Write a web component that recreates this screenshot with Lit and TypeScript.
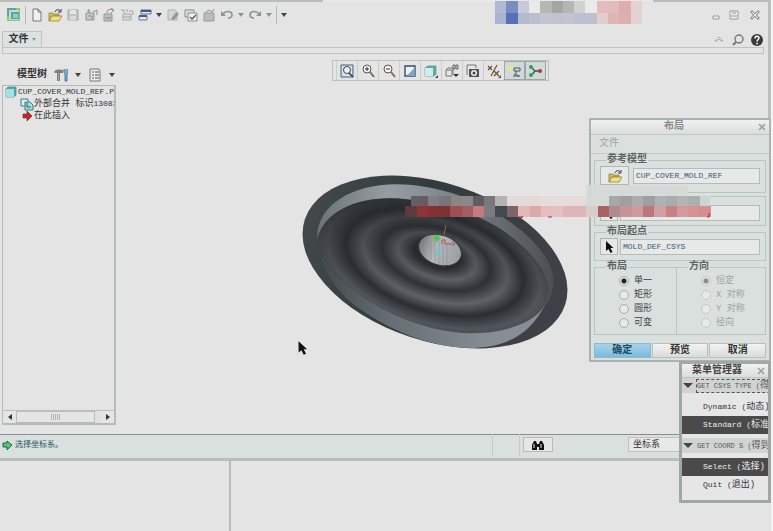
import { LitElement, html, svg, css } from "lit";
import { customElement } from "lit/decorators.js";

type Cell = [number, string];

const folder = svg`<path d="M1 5h4l1 1h5v2H4l-3 5z" fill="#cdbb5c" stroke="#8f8445" stroke-width=".8"/><path d="M4 8h10l-3 5H1z" fill="#f0e27c" stroke="#8f8445" stroke-width=".8"/><path d="M7 4c1-3 4-3 5-1m1-2v3h-3" fill="none" stroke="#333"/>`;

const glyphs: Record<string, unknown> = {
  logo: svg`<rect x="0" y="0" width="13" height="13" fill="#8fc56f"/><rect x="0" y="0" width="9" height="8" fill="#5f9db5"/><rect x="2" y="2" width="10" height="10" fill="#c3dfb5"/><rect x="4" y="4" width="8" height="7" fill="#4fa6ad"/><rect x="6" y="6" width="5" height="4" fill="#8fd0c4"/>`,
  page: svg`<path d="M3 1h5l3 3v9H3z" fill="#f0f0f0" stroke="#777"/><path d="M8 1v3h3" fill="none" stroke="#777"/>`,
  folder,
  save: svg`<path d="M2 2h10v10H2z" fill="#c4c6c6" stroke="#a4a7a7"/><path d="M4 2h6v4H4z" fill="#e4e4e4"/><path d="M4 8h6v4H4z" fill="#d8dada"/>`,
  saveAs: svg`<path d="M2 5h8v7H2z" fill="#c8c8c8" stroke="#909494"/><path d="M4 8h4v4M3 3h3M5 1v4M9 4l4-2v5" fill="none" stroke="#8d9191"/>`,
  saveUp: svg`<path d="M2 6h8v7H2z" fill="#bcbfbf" stroke="#929696"/><path d="M5 5c0-4 3-4 6-3M9 0l3 2-3 3M4 10h5" fill="none" stroke="#858989"/>`,
  box: svg`<path d="M3 6h8v6H3z" fill="#ddd" stroke="#a5a8a8"/><path d="M1 2h3v3m3-4v3m2-1h4v4M3 9h8" fill="none" stroke="#a0a3a3"/>`,
  windows: svg`<path d="M3 2h10v4H3z" fill="#e7edf4" stroke="#526c91"/><path d="M3 3h10" stroke="#3e5a86" stroke-width="2"/><path d="M1 8h8v4H1z" fill="#dce6ef" stroke="#6b7c92"/><path d="M1 8h8" stroke="#465f88" stroke-width="2"/>`,
  eraser: svg`<path d="M2 2h7l2 2v8H2z" fill="#d4d4d4" stroke="#b1b4b4"/><path d="M5 11l5-7 3 2-5 6z" fill="#949797"/>`,
  check: svg`<path d="M1 2h9v7H1z" fill="#ddd" stroke="#8b8e8e"/><path d="M4 5h9v8H4z" fill="#efefef" stroke="#8b8e8e"/><path d="M6 9l2 2 4-4" fill="none" stroke="#555" stroke-width="1.3"/>`,
  bin: svg`<path d="M2 5h10v8H2z" fill="#b9bcbc" stroke="#9a9d9d"/><path d="M4 4l3-2 3 2 2-3" fill="none" stroke="#8e9191"/>`,
  undo: svg`<path d="M3 6c3-4 9-3 9 1 0 2-2 3-4 3" fill="none" stroke="#8f9292" stroke-width="1.6"/><path d="M1 3v5h5z" fill="#8f9292"/>`,
  redo: svg`<path d="M11 6C8 2 2 3 2 7c0 2 2 3 4 3" fill="none" stroke="#8f9292" stroke-width="1.6"/><path d="M13 3v5H8z" fill="#8f9292"/>`,
  min: svg`<path d="M4 8h6v3H4z" fill="#eee" stroke="#999"/>`,
  max: svg`<path d="M3 3h8v8H3z" fill="#eee" stroke="#999"/><path d="M4 8h6M5 5h4" stroke="#999"/>`,
  close: svg`<path d="M3 3l8 8m0-8l-8 8" stroke="#999" stroke-width="3"/><path d="M4 4l6 6m0-6l-6 6" stroke="#eee"/>`,
  up: svg`<path d="M3 8l4-4 4 4H9L7 6 5 8z" fill="#eee" stroke="#999" stroke-width=".8"/>`,
  search: svg`<circle cx="8" cy="6" r="4" fill="none" stroke="#777" stroke-width="1.4"/><path d="M5 9l-3 3" stroke="#777" stroke-width="2"/>`,
  help: svg`<circle cx="7" cy="7" r="6" fill="#3a3a3a"/><path d="M5 5.500c0-3 4-3 4-.5 0 1.500-2 1.500-2 3.500" fill="none" stroke="#fff" stroke-width="1.500"/><path d="M6.200 9.800h1.600v1.500H6.200z" fill="#fff"/>`,
  tools: svg`<path d="M0 4c1-3 5-3 9-2v3H6v8H3V5H1z" fill="#7a7f84"/><path d="M4 5h1v8H4z" fill="#b99a74"/><path d="M10 1v3l1 2v7h2V6l1-2V1" fill="#86b4d4" stroke="#3f7299" stroke-width=".9"/>`,
  list: svg`<path d="M2 1h9l1 2v10H2z" fill="#ededed" stroke="#777"/><path d="M4 4h2m1 0h4M4 7h2m1 0h4M4 10h2m1 0h4" stroke="#555"/>`,
  cube: svg`<path d="M2 4l2-2h8v8l-2 2H2z" fill="#4fa9ac" stroke="#4c8184" stroke-width=".7"/><path d="M2 4h8v8H2z" fill="#a3e0df"/>`,
  merge: svg`<path d="M1 2h7v7H1z" fill="#dff0f0" stroke="#387b82"/><path d="M5 5h5l3 3v5H5z" fill="#a5dede" stroke="#387b82"/><path d="M7 6v4h4" fill="none" stroke="#276168"/>`,
  red: svg`<path d="M3 5h4V2l5 5-5 5V9H3z" fill="#c22a2a" stroke="#7c1818" stroke-width=".6"/>`,
  green: svg`<path d="M2 5h4V3l5 4-5 5V9H2z" fill="#56c47f" stroke="#1d6b3d"/>`,
  fit: svg`<path d="M1 1h12v12H1z" fill="#d6e0ea" stroke="#405f85"/><circle cx="7" cy="6" r="3.500" fill="#edf3f6" stroke="#444"/><path d="M9 9l4 4" stroke="#333" stroke-width="1.500"/>`,
  zin: svg`<circle cx="6" cy="5" r="4" fill="#f5f5f5" stroke="#555"/><path d="M4 5h4M6 3v4" stroke="#333"/><path d="M9 8l4 5" stroke="#866a4a" stroke-width="2"/>`,
  zout: svg`<circle cx="6" cy="5" r="4" fill="#f5f5f5" stroke="#555"/><path d="M4 5h4" stroke="#333"/><path d="M9 8l4 5" stroke="#866a4a" stroke-width="2"/>`,
  repaint: svg`<path d="M2 2h10v10H2z" fill="#edf1f4" stroke="#2f4d74" stroke-width="1.400"/><path d="M12 3v9H3z" fill="#7fa3c4"/><path d="M5 10l5-5" stroke="#f5f5f5"/>`,
  ortho: svg`<path d="M1 4l3-2h8v8l-2 2H1z" fill="#63aaa8" stroke="#579391" stroke-width=".7"/><path d="M1 4h8v8H1z" fill="#cdeeed"/><path d="M14 11v3h-3z" fill="#444"/>`,
  views: svg`<path d="M1 6h6v6H1zM1 6l2-2h5v6" fill="#e5e5e5" stroke="#777"/><path d="M8 1h2v4H8zm3 0h2v4h-2z" fill="none" stroke="#666"/><path d="M8 10h6l-3 3z" fill="#333"/>`,
  camera: svg`<path d="M1 1h9v3M1 1v10" fill="none" stroke="#777"/><path d="M3 5h10v8H3z" fill="#555"/><circle cx="8" cy="9" r="3" fill="#eee"/><circle cx="8" cy="9" r="1.500" fill="#444"/>`,
  datum: svg`<path d="M1 2l4 4m0-4L1 6m6 1l5 5m0-5l-5 5M10 1L4 12" stroke="#704d2c" stroke-width="1.200"/><path d="M14 11v3h-3z" fill="#555"/>`,
  annot: svg`<path d="M0 2h7v5H0z" fill="#e4e2a2"/><path d="M7 4h6v3H7zM9 7v3M6 12h7M7 10l5 2" fill="none" stroke="#456"/>`,
  spin: svg`<path d="M3 3l4 4-4 5m4-5h5" fill="none" stroke="#2c5e45" stroke-width="1.300"/><circle cx="3" cy="3" r="2" fill="#3e9a62"/><circle cx="3" cy="11" r="2" fill="#3e9a62"/><circle cx="12" cy="7" r="2" fill="#b9313a"/>`,
  binoc: svg`<path d="M1 12V7l2-4h2l1 3h2l1-3h2l2 4v5H8V9H6v3z" fill="#111"/><path d="M3 10V6m7 4V6" stroke="#eee"/>`,
  arrow: svg`<path d="M4 1v10l2.500-2 2 4 2-1-2-4h3z" fill="#111"/>`,
  x: svg`<path d="M4 4l6 6m0-6l-6 6" stroke="#9ea2a1" stroke-width="1.600"/>`,
};

const icon = (name: string) =>
  html`<svg class="icon" viewBox="0 0 14 14" aria-hidden="true">${glyphs[name]}</svg>`;
const tool = (name: string, label: string, extra = "") =>
  html`<button class="tool ${extra}" aria-label=${label}>${icon(name)}</button>`;
const caret = (c = "") => html`<i class="caret ${c}"></i>`;

const strip = (cells: Cell[], y: number, h: number) =>
  cells.slice(0, -1).map(
    ([x, c], i) => svg`<rect x=${x} y=${y} width=${cells[i + 1][0] - x} height=${h} fill=${c} shape-rendering="crispEdges"/>`
  );
const even = (start: number, step: number, colours: string[]): Cell[] =>
  [...colours, ""].map((c, i) => [Math.round(start + i * step), c]);

const titleTop = even(0, 11.3, ["#b0bad2", "#7a8cc2", "#c6cadb", "#eaeae8", "#b4b8b2", "#a3a7a3", "#b3b7b3", "#cfd2ce", "#eaeae8", "#e4bcbe", "#e2bcbc", "#deadad", "#e5d3d3"]);
const titleLow = even(0, 11.3, ["#a9b4cf", "#566fb5", "#b4bace", "#b9bfcd", "#c2c5d0", "#c0c2cf", "#c2c4cf", "#bcc0d2", "#bcc0d2", "#e2cccc", "#deb5b2", "#ddafad", "#e2d2d2"]);
const bandTop: Cell[] = [
  [6, "#606066"], [14, "#6b5a5f"], [23, "#7f7f84"], [34, "#75757a"], [46, "#8d8484"], [57, "#8b8689"], [68, "#605c60"], [79, "#77797d"], [90, "#b3b3b4"], [102, "#e6d9d9"], [136, "#e7dcdc"], [181, "#d5dad8"],
  [204, "#a6a8a8"], [215, "#a29fa2"], [227, "#adabac"], [238, "#9d9fa0"], [250, "#b0b2b2"], [261, "#a9acad"], [272, "#b3b4b4"], [283, "#a9b0ae"], [295, "#cdd5d2"], [305, ""],
];
const bandLow: Cell[] = [
  [0, "#5d3a3c"], [12, "#8f3333"], [23, "#843035"], [34, "#7d3236"], [45, "#a14e50"], [57, "#a05e62"], [68, "#c77a7e"], [79, "#7b7c80"], [90, "#454850"], [102, "#7d6467"], [113, "#e3b8b8"], [125, "#dda8aa"], [136, "#e6bcbd"], [147, "#e4c0c0"], [158, "#e0b5b8"], [181, "#d8cccc"],
  [193, "#a86264"], [204, "#b08c90"], [215, "#c79397"], [227, "#cf9a9b"], [238, "#b9797c"], [249, "#cda1a3"], [261, "#c98082"], [272, "#d29a9c"], [283, "#d49495"], [294, "#d68e8c"], [306, ""],
];

@customElement("app-root")
export class AppRoot extends LitElement {
  static styles = css`
    :host { display: flex; flex-direction: column; min-height: 100vh; box-sizing: border-box; padding-right: 2px; background: #f4f4f4; position: relative; overflow: hidden;
      font: 9px/12px "Liberation Mono", "Noto Sans CJK SC", monospace; color: #333; }
    * { box-sizing: border-box; }
    button, input, select { font: inherit; color: inherit; margin: 0; padding: 0; border: 0; border-radius: 0; background: none; }
    .latin { font-size: 8px; }
    .icon { display: block; width: 14px; height: 14px; flex: none; }
    .upper { flex: 1; display: flex; flex-direction: column; background: #e4e4e4; border-right: 3px solid #bbc0be; }
    .edge { height: 2px; background: #babebb; display: flex; }
    .edge::after { content: ""; width: 43%; margin-left: 42%; background: #e8e8e8; }
    .quick { height: 26px; display: flex; align-items: center; padding: 0 6px 0 7px; gap: 4px; }
    .sep { width: 1px; height: 18px; background: #b4b7b6; }
    .tool { display: block; }
    .caret { border: 3px solid transparent; border-top: 4px solid #444; border-bottom: 0; width: 6px; height: 4px; flex: none; }
    .dim { border-top-color: #909393; }
    .push { margin-left: auto; }
    .quick .win + .win { margin-left: 3px; }
    .tabs { height: 19px; display: flex; align-items: flex-end; padding: 0 4px 0 2px; }
    .tab { height: 16px; width: 40px; background: #dce2df; border: 1px solid #bfc4c2; border-bottom: 0; display: flex; align-items: center; justify-content: center; gap: 3px; font-size: 10px; font-weight: bold; color: #333; }
    .tab .caret { border-width: 3px 2px 0; width: 4px; height: 3px; }
    .help { margin-left: auto; display: flex; gap: 5px; }
    .ribbon { height: 7px; margin: 0 4px 0 2px; border: 1px solid #bfc4c2; }
    .work { flex: 1; display: flex; align-items: stretch; padding: 6px 0 9px 2px; position: relative; }
    .tree { width: 114px; display: flex; flex-direction: column; }
    .treehead { height: 25px; display: flex; align-items: center; padding: 4px 0 0 15px; gap: 7px; font-size: 10px; }
    .treebox { flex: 1; border: 1px solid #b5bbb9; border-right-width: 2px; border-bottom-width: 2px; display: flex; flex-direction: column; overflow: hidden; }
    .nodes { list-style: none; margin: 0; padding: 0; flex: 1; }
    .nodes li { display: flex; align-items: center; white-space: pre; height: 12px; padding-left: 1px; }
    .nodes .child { padding-left: 17px; }
    .scroll { height: 13px; display: flex; background: #dce3e1; border-top: 1px solid #bac0be; }
    .scroll button { width: 13px; background: #e5e5e5; display: flex; align-items: center; justify-content: center; }
    .scroll .thumb { width: 79px; border: 1px solid #b9bebc; background: #e4e6e5; }
    .scroll .end { margin-left: auto; }
    .grip { width: 9px; height: 6px; background: repeating-linear-gradient(90deg, #b2b5b4 0 1px, #e4e6e5 1px 2px); }
    .left, .right { border: 3px solid transparent; height: 6px; }
    .left { border-right: 4px solid #333; border-left: 0; }
    .right { border-left: 4px solid #333; border-right: 0; }
    .viewbar { display: flex; align-self: flex-start; height: 21px; border: 1px solid #bcc1bf; padding: 0 2px 0 3px; margin: 0 auto 0 216px; }
    .viewbar .tool { width: 21px; padding: 0 3px; border-left: 1px solid #c9cdcb; }
    .viewbar .on { background: #d0dbd9; border: 1px solid #9da6a3; padding: 0 2px; }
    .model { position: absolute; left: 290px; top: 111px; width: 290px; height: 190px; }
    .pointer { position: absolute; left: 294px; top: 286px; width: 16px; height: 16px; }
    .status { height: 27px; background: #d9e0dd; border-top: 1px solid #888e8b; border-bottom: 3px solid #b9bebc; display: flex; align-items: center; padding: 0 91px 4px 1px; color: #28566a; }
    .status output { display: flex; align-items: center; font-size: 8px; flex: 1; }
    .status .vsep { width: 1px; height: 22px; background: #c4cac7; margin-right: 26px; }
    .status .vsep + .vsep { margin-right: 3px; }
    .find { width: 30px; height: 15px; border: 1px solid #b5bbb8; background: #e6e6e6; display: flex; justify-content: center; overflow: hidden; }
    .status select { appearance: none; width: 52px; height: 15px; border: 1px solid #bcc2bf; background: #e8e8e8; color: #333; padding-left: 4px; margin-left: 75px; }
    .panes { height: 70px; display: grid; grid-template-columns: 231px 1fr; background: #e4e4e4; }
    .panes div:first-child { border-right: 2px solid #b9bdbc; }
    .dialog { position: absolute; right: 2px; top: 118px; width: 182px; border: 2px solid #aab3b0; background: #d9e0dd; padding-bottom: 2px; }
    .title { height: 15px; background: linear-gradient(#f0f0f0, #dcdedd); display: flex; align-items: center; font-size: 10px; color: #888d8a; border-bottom: 1px solid #c0c6c3; }
    .title span { flex: 1; text-align: center; padding-right: 2px; }
    .dialog .title span { padding-right: 0; padding-left: 2px; font-weight: bold; }
    .menu { display: block; width: 100%; height: 19px; border-bottom: 1px solid #c2c9c6; text-align: left; padding-left: 8px; font-size: 10px; color: #a0a5a3; }
    fieldset { margin: 0 3px; padding: 0 5px; border: 1px solid #bcc4c1; min-width: 0; color: #466a7a; }
    legend { font-size: 10px; line-height: 12px; height: 12px; font-weight: bold; color: #5d6563; padding: 0 1px; margin-left: 6px; }
    .pick { display: flex; gap: 2px; align-items: center; }
    .pick button { width: 18px; height: 17px; border: 1px solid #b0b7b4; background: #e6e8e7; padding: 0 1px; }
    .pick .wide { width: 29px; height: 19px; display: flex; align-items: center; justify-content: center; margin-right: 2px; }
    .pick input { flex: 1; min-width: 0; height: 16px; border: 1px solid #b4bbb8; background: #e7e9e8; padding-left: 2px; font-size: 8px; color: #34596b; }
    .f1 { height: 39px; }
    .f2 { height: 30px; margin-top: 3px; padding-top: 7px; }
    .f3 { height: 35px; }
    .choices { display: grid; grid-template-columns: 83px 1fr; margin: 0 3px 8px; }
    .choices fieldset { margin: 0; height: 74px; padding: 1px 0 0 24px; }
    .choices fieldset + fieldset { border-left: 0; }
    .choices legend { margin-left: -13px; }
    .choices label { display: flex; align-items: center; gap: 5px; height: 14px; color: #3c3c3c; }
    .choices fieldset[disabled] label { color: #9da2a0; }
    .choices input { appearance: none; width: 10px; height: 10px; border-radius: 50%; border: 1px solid #a7adaa; background: #e6e9e8; }
    .choices input:checked { background: radial-gradient(circle, #222 0 2px, #dfe2e1 3px); }
    .choices [disabled] input { border-color: #c2c9c6; }
    .choices [disabled] input:checked { background: radial-gradient(circle, #858b89 0 2px, #dfe2e1 3px); }
    .actions { display: flex; margin: 0 3px; gap: 1px; }
    .actions button { flex: 1; height: 15px; font-size: 10px; font-weight: bold; background: linear-gradient(#f2f2f2, #dadcdb); border: 1px solid #b9bfbc; }
    .actions .primary { background: linear-gradient(#a5d3ea, #7cbbdc); border-color: #8cb9cf; color: #214a60; }
    .manager { position: absolute; right: 2px; top: 361px; width: 92px; height: 142px; border: 3px solid #a0a7a4; background: #e6e6e6; overflow: hidden; white-space: nowrap; }
    .manager .title { color: #444; font-weight: bold; height: 14px; }
    .group { height: 15px; width: 100%; display: flex; align-items: center; background: #cfd4d2; color: #555; gap: 4px; padding-left: 1px; text-align: left; }
    .group .latin { font-size: 7px; }
    .group .caret { border-width: 5px 5px 0; width: 10px; height: 5px; }
    .group .focus { outline: 1px dashed #555; }
    .entry { display: block; width: 100%; height: 18px; text-align: left; padding-left: 21px; }
    .set { padding: 5px 0 4px; }
    .sel { background: #4a4a4a; color: #eee; }
    .cover { position: absolute; pointer-events: none; }
    .titlecover { left: 495px; top: 1px; width: 147px; height: 23px; }
    .bandcover { left: 405px; top: 185px; width: 308px; height: 40px; }
  `;

  render() {
    return html`
      <section class="upper">
        <div class="edge"></div>
        <header class="quick">
          ${icon("logo")}<span class="sep"></span>
          ${tool("page", "New")}${tool("folder", "Open")}${tool("save", "Save")}${tool("saveAs", "Save as")}${tool("saveUp", "Check in")}${tool("box", "Regenerate")}${tool("windows", "Windows")}
          ${caret()}${tool("eraser", "Erase")}${tool("check", "Verify")}${tool("bin", "Delete")}${tool("undo", "Undo")}${caret("dim")}${tool("redo", "Redo")}${caret("dim")}
          <span class="sep"></span>${caret()}
          ${tool("min", "Minimize", "push")}${tool("max", "Restore", "win")}${tool("close", "Close", "win")}
        </header>
        <nav class="tabs">
          <button class="tab">文件${caret("dim")}</button>
          <div class="help">${tool("up", "Collapse")}${tool("search", "Search")}${tool("help", "Help")}</div>
        </nav>
        <div class="ribbon"></div>
        <main class="work">
          <aside class="tree">
            <div class="treehead"><b>模型树</b>${tool("tools", "Settings")}${caret()}${tool("list", "Show")}${caret()}</div>
            <div class="treebox">
              <ul class="nodes">
                <li>${icon("cube")}<span class="latin">CUP_COVER_MOLD_REF.PRT</span></li>
                <li class="child">${icon("merge")}<span>外部合并 标识<span class="latin">13083</span></span></li>
                <li class="child">${icon("red")}<span>在此插入</span></li>
              </ul>
              <div class="scroll">
                <button aria-label="Scroll left"><i class="left"></i></button>
                <button class="thumb" aria-label="Scroll thumb"><i class="grip"></i></button>
                <button class="end" aria-label="Scroll right"><i class="right"></i></button>
              </div>
            </div>
          </aside>
          ${this.model()}
          <div class="viewbar">
            ${tool("fit", "Refit")}${tool("zin", "Zoom in")}${tool("zout", "Zoom out")}${tool("repaint", "Repaint")}${tool("ortho", "Display style")}${tool("views", "Saved views")}${tool("camera", "View manager")}${tool("datum", "Datum display")}${tool("annot", "Annotations", "on")}${tool("spin", "Spin center", "on")}
          </div>
          <svg class="pointer" viewBox="0 0 14 14" aria-hidden="true">${glyphs.arrow}</svg>
        </main>
      </section>
      <footer class="status">
        <output>${icon("green")}选择坐标系。</output>
        <span class="vsep"></span><span class="vsep"></span>
        <button class="find" aria-label="Find">${icon("binoc")}</button>
        <select aria-label="Filter"><option>坐标系</option></select>
      </footer>
      <div class="panes"><div></div><div></div></div>
      ${this.dialog()}${this.manager()}
      <svg class="cover titlecover" viewBox="0 0 147 23" aria-hidden="true">${strip(titleTop, 0, 12)}${strip(titleLow, 12, 11)}</svg>
      <svg class="cover bandcover" viewBox="0 0 308 40" aria-hidden="true">
        <path d="M181 0h102v11h22v10H181z" fill="#d5dad8" fill-opacity=".9"/>
        ${strip(bandTop, 11, 10)}${strip(bandLow, 21, 11)}
        <path d="M304 28v4h-2M113 32h5l-3 1M143 32h4" stroke="#b02c34" fill="none"/>
      </svg>
    `;
  }

  private model() {
    return html`<svg class="model" viewBox="0 0 290 190" role="img" aria-label="Cup cover model">
      <defs>
        <radialGradient id="floor" gradientUnits="userSpaceOnUse" cx="0" cy="0" r="1" fx=".005" fy="-.24" gradientTransform="translate(400 288) rotate(17) scale(365 195)">
          <stop offset=".2" stop-color="#2b2e31"/><stop offset=".33" stop-color="#64676b"/><stop offset=".46" stop-color="#2f3236"/><stop offset=".61" stop-color="#5f6266"/><stop offset=".75" stop-color="#2a2d31"/><stop offset=".9" stop-color="#525559"/><stop offset="1" stop-color="#45484c"/>
        </radialGradient>
        <linearGradient id="shade" x1=".55" y1="0" x2=".45" y2=".7"><stop stop-color="#25282b" stop-opacity=".85"/><stop offset=".5" stop-color="#25282b" stop-opacity=".35"/><stop offset="1" stop-color="#25282b" stop-opacity="0"/></linearGradient>
        <linearGradient id="wall"><stop stop-color="#6c7478"/><stop offset=".3" stop-color="#969da3"/><stop offset=".6" stop-color="#7b8188"/><stop offset="1" stop-color="#4a4f53"/></linearGradient>
        <linearGradient id="low"><stop stop-color="#41474a"/><stop offset=".3" stop-color="#656d73"/><stop offset=".75" stop-color="#868d95"/><stop offset="1" stop-color="#868d94"/></linearGradient>
        <linearGradient id="rim"><stop stop-color="#424849"/><stop offset=".4" stop-color="#333c3c"/><stop offset="1" stop-color="#404148"/></linearGradient>
        <linearGradient id="hub"><stop stop-color="#73787b"/><stop offset=".4" stop-color="#b4b8ba"/><stop offset="1" stop-color="#9a9ea2"/></linearGradient>
      </defs>
      <ellipse cx="145" cy="97" rx="137" ry="79" transform="rotate(18.200 145 97)" fill="url(#rim)"/>
      <g transform="translate(10 5) scale(.3333)">
        <path d="M54 220C62 290 100 365 190 424C290 492 400 531 505 534C610 534 690 500 738 398L400 250Z" fill="url(#low)"/>
        <path d="M52 207C48 110 150 43 290 43C450 45 600 115 700 215C770 290 772 345 742 400L400 250Z" fill="url(#wall)"/>
        <path id="base" d="M52 207C70 130 160 85 270 85C400 88 540 130 620 190C700 250 760 320 742 385C725 455 620 490 510 490C380 488 240 425 150 355C95 310 60 270 52 207Z" fill="url(#floor)"/>
        <path d="M52 207C70 130 160 85 270 85C400 88 540 130 620 190C700 250 760 320 742 385C725 455 620 490 510 490C380 488 240 425 150 355C95 310 60 270 52 207Z" fill="url(#shade)"/>
      </g>
      <ellipse cx="150" cy="85" rx="22" ry="15" transform="rotate(18 150 85)" fill="url(#hub)" stroke="#36393b"/>
      <path d="M141 77v18m4-20v22m4-21v23m4-21v24m4-22v20" stroke="#858a8d" stroke-opacity=".5"/>
      <path d="M156 60l-2 10" stroke="#94692e"/>
      <path d="M145 71l4 4" stroke="#45c84b" stroke-width="5"/>
      <path d="M152 79v-4h3v4h7m0-2l3 2-3 2" fill="none" stroke="#bd4752"/>
      <path d="M149 78l-1 8" stroke="#65cbd0"/><circle cx="148" cy="88" r="2" fill="#54d3dc"/>
    </svg>`;
  }

  private dialog() {
    const row = (name: string, label: string, i: number) =>
      html`<label><input type="radio" name=${name} .checked=${i === 0} />${label}</label>`;
    return html`<section class="dialog" aria-label="布局">
      <div class="title"><span>布局</span><button aria-label="Close">${icon("x")}</button></div>
      <button class="menu">文件</button>
      <fieldset class="f1"><legend>参考模型</legend>
        <div class="pick"><button class="wide" aria-label="Open model">${icon("folder")}</button><input aria-label="参考模型" value="CUP_COVER_MOLD_REF" /></div></fieldset>
      <fieldset class="f2"><div class="pick"><button aria-label="Pick">${icon("arrow")}</button><input aria-label="Model name" /></div></fieldset>
      <fieldset class="f3"><legend>布局起点</legend>
        <div class="pick"><button aria-label="Pick origin">${icon("arrow")}</button><input aria-label="布局起点" value="MOLD_DEF_CSYS" /></div></fieldset>
      <div class="choices">
        <fieldset><legend>布局</legend>${["单一", "矩形", "圆形", "可变"].map((l, i) => row("layout", l, i))}</fieldset>
        <fieldset disabled><legend>方向</legend>${["恒定", "X 对称", "Y 对称", "径向"].map((l, i) => row("direction", l, i))}</fieldset>
      </div>
      <div class="actions"><button class="primary">确定</button><button>预览</button><button>取消</button></div>
    </section>`;
  }

  private manager() {
    return html`<section class="manager" aria-label="菜单管理器">
      <div class="title"><span>菜单管理器</span><button aria-label="Close">${icon("x")}</button></div>
      <button class="group">${caret()}<span class="focus"><span class="latin">GET CSYS TYPE (</span>得到坐标系)</span></button>
      <div class="set">
        <button class="entry"><span class="latin">Dynamic (</span>动态)</button>
        <button class="entry sel"><span class="latin">Standard (</span>标准)</button>
      </div>
      <button class="group">${caret()}<span><span class="latin">GET COORD S (</span>得到坐标系)</span></button>
      <div class="set">
        <button class="entry sel"><span class="latin">Select (</span>选择)</button>
        <button class="entry"><span class="latin">Quit (</span>退出)</button>
      </div>
    </section>`;
  }
}
